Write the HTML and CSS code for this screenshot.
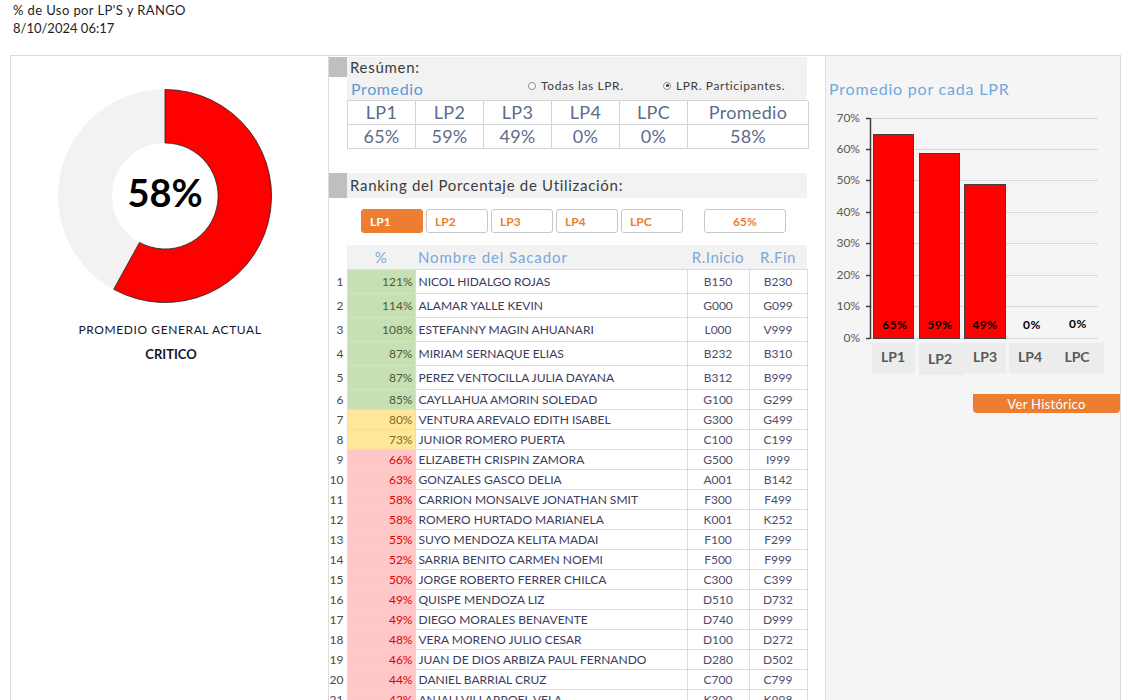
FILE: index.html
```html
<!DOCTYPE html>
<html lang="es">
<head>
<meta charset="utf-8">
<title>% de Uso por LP'S y RANGO</title>
<link rel="stylesheet" href="styles.css">
</head>
<body>
<header class="top">
  <div class="top-title">% de Uso por LP'S y RANGO</div>
  <div class="top-date">8/10/2024 06:17</div>
</header>
<main class="board">
  <section class="left">
    <svg class="donut" width="214" height="214" viewBox="0 0 214 214">
      <circle cx="107" cy="107" r="80" fill="none" stroke="#f2f2f2" stroke-width="54"/>
      <path d="M107,0.5 A106.5,106.5 0 1 1 55.7,200.3 L81.5,153.4 A53,53 0 1 0 107,54 Z" fill="#ff0000" stroke="#222" stroke-width="0.8"/>
      <text x="107" y="108" text-anchor="middle" dominant-baseline="middle" class="donut-val">58%</text>
    </svg>
    <div class="left-cap">PROMEDIO GENERAL ACTUAL</div>
    <div class="left-state">CRITICO</div>
  </section>

  <section class="mid">
    <div class="sec-head"><span class="sec-mark"></span><span class="sec-title">Resúmen:</span></div>
    <div class="prom-row">
      <span class="prom-label">Promedio</span>
      <label class="radio"><span class="radio-dot"></span>Todas las LPR.</label>
      <label class="radio radio-on"><span class="radio-dot"></span>LPR. Participantes.</label>
    </div>
    <div class="sum-table">
      <div class="sum-cell">LP1</div><div class="sum-cell">LP2</div><div class="sum-cell">LP3</div><div class="sum-cell">LP4</div><div class="sum-cell">LPC</div><div class="sum-cell">Promedio</div>
      <div class="sum-cell">65%</div><div class="sum-cell">59%</div><div class="sum-cell">49%</div><div class="sum-cell">0%</div><div class="sum-cell">0%</div><div class="sum-cell">58%</div>
    </div>

    <div class="sec-head rank-head"><span class="sec-mark"></span><span class="sec-title">Ranking del Porcentaje de Utilización:</span></div>
    <div class="lp-tabs">
      <button class="lp-tab lp-active">LP1</button>
      <button class="lp-tab">LP2</button>
      <button class="lp-tab">LP3</button>
      <button class="lp-tab">LP4</button>
      <button class="lp-tab">LPC</button>
      <div class="lp-total">65%</div>
    </div>

    <table class="rank">
      <colgroup><col class="c-idx"><col class="c-pct"><col class="c-name"><col class="c-ri"><col class="c-rf"></colgroup>
      <thead>
        <tr><th class="idx"></th><th class="h-pct">%</th><th class="h-name">Nombre del Sacador</th><th>R.Inicio</th><th>R.Fin</th></tr>
      </thead>
      <tbody>
        <tr class="tall"><td class="idx">1</td><td class="pct g">121%</td><td class="name">NICOL HIDALGO ROJAS</td><td class="r">B150</td><td class="r">B230</td></tr>
        <tr class="tall"><td class="idx">2</td><td class="pct g">114%</td><td class="name">ALAMAR YALLE KEVIN</td><td class="r">G000</td><td class="r">G099</td></tr>
        <tr class="tall"><td class="idx">3</td><td class="pct g">108%</td><td class="name">ESTEFANNY MAGIN AHUANARI</td><td class="r">L000</td><td class="r">V999</td></tr>
        <tr class="tall"><td class="idx">4</td><td class="pct g">87%</td><td class="name">MIRIAM SERNAQUE ELIAS</td><td class="r">B232</td><td class="r">B310</td></tr>
        <tr class="tall"><td class="idx">5</td><td class="pct g">87%</td><td class="name">PEREZ VENTOCILLA JULIA DAYANA</td><td class="r">B312</td><td class="r">B999</td></tr>
        <tr><td class="idx">6</td><td class="pct g">85%</td><td class="name">CAYLLAHUA AMORIN SOLEDAD</td><td class="r">G100</td><td class="r">G299</td></tr>
        <tr><td class="idx">7</td><td class="pct y">80%</td><td class="name">VENTURA AREVALO EDITH ISABEL</td><td class="r">G300</td><td class="r">G499</td></tr>
        <tr><td class="idx">8</td><td class="pct y">73%</td><td class="name">JUNIOR ROMERO PUERTA</td><td class="r">C100</td><td class="r">C199</td></tr>
        <tr><td class="idx">9</td><td class="pct rd">66%</td><td class="name">ELIZABETH CRISPIN ZAMORA</td><td class="r">G500</td><td class="r">I999</td></tr>
        <tr><td class="idx">10</td><td class="pct rd">63%</td><td class="name">GONZALES GASCO DELIA</td><td class="r">A001</td><td class="r">B142</td></tr>
        <tr><td class="idx">11</td><td class="pct rd">58%</td><td class="name">CARRION MONSALVE JONATHAN SMIT</td><td class="r">F300</td><td class="r">F499</td></tr>
        <tr><td class="idx">12</td><td class="pct rd">58%</td><td class="name">ROMERO HURTADO MARIANELA</td><td class="r">K001</td><td class="r">K252</td></tr>
        <tr><td class="idx">13</td><td class="pct rd">55%</td><td class="name">SUYO MENDOZA KELITA MADAI</td><td class="r">F100</td><td class="r">F299</td></tr>
        <tr><td class="idx">14</td><td class="pct rd">52%</td><td class="name">SARRIA BENITO CARMEN NOEMI</td><td class="r">F500</td><td class="r">F999</td></tr>
        <tr><td class="idx">15</td><td class="pct rd">50%</td><td class="name">JORGE ROBERTO FERRER CHILCA</td><td class="r">C300</td><td class="r">C399</td></tr>
        <tr><td class="idx">16</td><td class="pct rd">49%</td><td class="name">QUISPE MENDOZA LIZ</td><td class="r">D510</td><td class="r">D732</td></tr>
        <tr><td class="idx">17</td><td class="pct rd">49%</td><td class="name">DIEGO MORALES BENAVENTE</td><td class="r">D740</td><td class="r">D999</td></tr>
        <tr><td class="idx">18</td><td class="pct rd">48%</td><td class="name">VERA MORENO JULIO CESAR</td><td class="r">D100</td><td class="r">D272</td></tr>
        <tr><td class="idx">19</td><td class="pct rd">46%</td><td class="name">JUAN DE DIOS ARBIZA PAUL FERNANDO</td><td class="r">D280</td><td class="r">D502</td></tr>
        <tr><td class="idx">20</td><td class="pct rd">44%</td><td class="name">DANIEL BARRIAL CRUZ</td><td class="r">C700</td><td class="r">C799</td></tr>
        <tr><td class="idx">21</td><td class="pct rd">42%</td><td class="name">ANJALI VILLARROEL VELA</td><td class="r">K300</td><td class="r">K998</td></tr>
      </tbody>
    </table>
  </section>

  <section class="right">
    <div class="chart-title">Promedio por cada LPR</div>
    <svg class="chart" width="293" height="270" viewBox="0 0 293 270">
      <g stroke="#d9d9d9" stroke-width="1">
        <line x1="44" y1="8.5" x2="272" y2="8.5"/>
        <line x1="44" y1="39.5" x2="272" y2="39.5"/>
        <line x1="44" y1="70.5" x2="272" y2="70.5"/>
        <line x1="44" y1="102.5" x2="272" y2="102.5"/>
        <line x1="44" y1="133.5" x2="272" y2="133.5"/>
        <line x1="44" y1="165.5" x2="272" y2="165.5"/>
        <line x1="44" y1="196.5" x2="272" y2="196.5"/>
        <line x1="44" y1="228.5" x2="272" y2="228.5"/>
      </g>
      <g stroke="#404040" stroke-width="1.5">
        <line x1="44.5" y1="8" x2="44.5" y2="229"/>
        <line x1="40" y1="8.5" x2="44" y2="8.5"/>
        <line x1="40" y1="39.5" x2="44" y2="39.5"/>
        <line x1="40" y1="70.5" x2="44" y2="70.5"/>
        <line x1="40" y1="102.5" x2="44" y2="102.5"/>
        <line x1="40" y1="133.5" x2="44" y2="133.5"/>
        <line x1="40" y1="165.5" x2="44" y2="165.5"/>
        <line x1="40" y1="196.5" x2="44" y2="196.5"/>
        <line x1="40" y1="228.5" x2="44" y2="228.5"/>
      </g>
      <g class="ylab" text-anchor="end" dominant-baseline="middle">
        <text x="34" y="9">70%</text>
        <text x="34" y="40">60%</text>
        <text x="34" y="71">50%</text>
        <text x="34" y="103">40%</text>
        <text x="34" y="134">30%</text>
        <text x="34" y="166">20%</text>
        <text x="34" y="197">10%</text>
        <text x="34" y="229">0%</text>
      </g>
      <g fill="#ff0000" stroke="#404040" stroke-width="1">
        <rect x="47.5" y="24.5" width="40" height="204"/>
        <rect x="93.5" y="43.5" width="40" height="185"/>
        <rect x="138.5" y="74.5" width="41" height="154"/>
      </g>
      <g class="vlab" text-anchor="middle">
        <text x="69" y="219">65%</text>
        <text x="114" y="219">59%</text>
        <text x="159" y="219">49%</text>
        <text x="206" y="219">0%</text>
        <text x="252" y="218">0%</text>
      </g>
      <g fill="#ececec">
        <rect x="46" y="233" width="43" height="30"/>
        <rect x="93" y="233" width="46" height="32"/>
        <rect x="139" y="233" width="41" height="30"/>
        <rect x="183" y="233" width="95" height="30"/>
      </g>
      <g class="xlab" text-anchor="middle" dominant-baseline="middle">
        <text x="67" y="248">LP1</text>
        <text x="114" y="250">LP2</text>
        <text x="159" y="248">LP3</text>
        <text x="204" y="248">LP4</text>
        <text x="251" y="248">LPC</text>
      </g>
    </svg>
    <button class="hist-btn">Ver Histórico</button>
  </section>
</main>
</body>
</html>
```
FILE: styles.css
```css
* { box-sizing: border-box; }
html, body { margin: 0; padding: 0; background: #ffffff; }
body {
  font-family: "Lato", "DejaVu Sans", sans-serif;
  color: #222;
  overflow: hidden;
}
.top { padding: 1px 0 0 13px; font-size: 13px; line-height: 18px; color: #1e1e1e; }
.top-title { letter-spacing: 0.4px; }
.board {
  margin: 18px 0 0 10px;
  width: 1111px;
  height: 700px;
  border: 1px solid #d9d9d9;
  display: flex;
}
/* left */
.left { width: 317px; flex: none; display: flex; flex-direction: column; }
.donut { margin: 33px 0 0 47px; display: block; }
.donut-val { font-size: 38px; font-weight: 700; fill: #000; }
.left-cap { margin-top: 19px; text-align: center; font-size: 12px; line-height: 16px; color: #14142a; padding-left: 1px; letter-spacing: 0.6px; }
.left-state { margin-top: 8px; text-align: center; font-size: 13px; line-height: 16px; font-weight: 700; color: #14142a; padding-left: 3px; }
/* mid */
.mid { width: 497px; flex: none; border-left: 1px solid #dcdcdc; padding-top: 1px; }
.sec-head { display: flex; height: 20px; }
.sec-mark { width: 18px; flex: none; background: #bfbfbf; }
.sec-title { width: 460px; background: #f2f2f2; font-size: 15px; line-height: 20px; padding-left: 3px; color: #3c3c3c; letter-spacing: 0.7px; }
.prom-row { margin-left: 18px; width: 460px; height: 23px; background: #f2f2f2; display: flex; align-items: center; }
.prom-label { width: 181px; flex: none; padding-left: 4px; font-size: 16px; color: #5b9bd5; line-height: 23px; letter-spacing: 0.6px; }
.radio { display: flex; align-items: center; gap: 5px; font-size: 12px; color: #3c3c3c; margin-top: -6px; letter-spacing: 0.6px; }
.radio:first-of-type { width: 135px; flex: none; }
.radio-dot { width: 8px; height: 8px; border-radius: 50%; border: 1px solid #8a8a8a; background: #fff; position: relative; }
.radio-on .radio-dot::after { content: ""; position: absolute; left: 1.5px; top: 1.5px; width: 3px; height: 3px; border-radius: 50%; background: #333; }
.sum-table {
  margin-left: 18px; width: 461px;
  display: grid; grid-template-columns: 68px 68px 68px 68px 68px 121px;
  border-top: 1px solid #d4d4d4; border-left: 1px solid #d4d4d4;
}
.sum-cell {
  height: 24px; border-right: 1px solid #d4d4d4; border-bottom: 1px solid #d4d4d4;
  text-align: center; font-size: 18px; line-height: 23px; color: #5d6c8a; letter-spacing: 0.3px;
}
.rank-head { margin-top: 24px; height: 25px; }
.rank-head .sec-title { line-height: 25px; }
.lp-tabs { display: flex; gap: 3px; margin: 11px 0 0 32px; height: 24px; }
.lp-tab, .lp-total {
  width: 62px; height: 24px; border: 1px solid #c8c8c8; border-radius: 3px; background: #fff;
  color: #ed7d31; font-family: inherit; font-size: 12px; font-weight: 700; padding: 0;
  display: flex; align-items: center; justify-content: center;
}
.lp-tab { justify-content: flex-start; padding-left: 8px; }
.lp-active { background: #ed7d31; border-color: #ed7d31; color: #fff; }
.lp-total { width: 82px; margin-left: 18px; }
.rank { margin-top: 12px; border-collapse: collapse; table-layout: fixed; width: 478px; }
.c-idx { width: 18px; } .c-pct { width: 68px; } .c-name { width: 272px; } .c-ri { width: 62px; } .c-rf { width: 58px; }
.rank th { height: 24px; background: #f2f2f2; font-weight: 400; font-size: 15px; color: #7aa8d8; padding: 0; text-align: center; letter-spacing: 0.5px; }
.rank th.idx { background: #fff; }
.rank th.h-name { text-align: left; padding-left: 3px; letter-spacing: 0.9px; }
.rank td { height: 20px; padding: 0; font-size: 12px; border: 1px solid #dcdcdc; white-space: nowrap; overflow: hidden; }
.rank tr.tall td { height: 24px; }
.rank td.idx { border: none; text-align: right; padding-right: 3px; color: #4a4a4a; }
.rank td.pct { text-align: right; padding-right: 2px; }
.rank td.g { background: #c6e0b4; color: #4b5a3c; }
.rank td.y { background: #ffe699; color: #7f6b1a; }
.rank td.rd { background: #ffc7c7; color: #e00000; }
.rank td.name { padding-left: 3px; color: #3b3b5c; }
.rank td.r { text-align: center; color: #4d4d6e; }
/* right */
.right { width: 295px; flex: none; background: #f5f5f5; border-left: 1px solid #e0e0e0; display: flex; flex-direction: column; }
.chart-title { margin-top: 23px; padding-left: 3px; font-size: 16px; line-height: 20px; color: #6fa8e0; letter-spacing: 0.8px; }
.chart { display: block; margin-top: 11px; }
.ylab text { font-size: 12px; fill: #595959; }
.vlab text { font-size: 12px; font-weight: 700; fill: #000; letter-spacing: 0.5px; }
.xlab text { font-size: 14px; font-weight: 700; fill: #595959; }
.hist-btn {
  margin: 14px 0 0 auto; width: 147px; height: 19px; border: none; border-radius: 0 0 4px 4px;
  background: #ed7d31; color: #fff; font-family: inherit; font-size: 13px; padding: 0; letter-spacing: 0.3px;
}
```
